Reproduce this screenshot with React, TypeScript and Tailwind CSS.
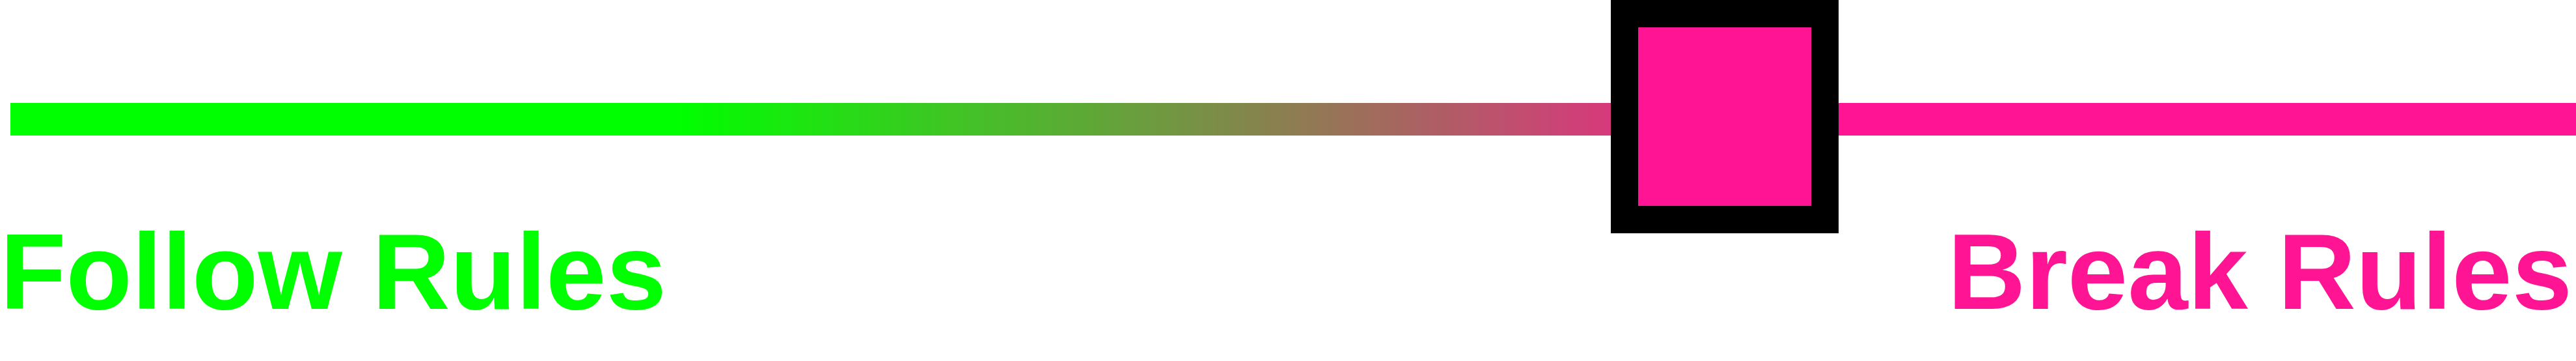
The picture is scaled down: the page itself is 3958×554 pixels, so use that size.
const RuleSlider: React.FC = () => {
  return (
    <div className="w-[3958px] h-[554px] bg-white overflow-hidden font-['Liberation_Sans',Arial,sans-serif]">
      {/* slider */}
      <div className="flex items-start h-[358px]">
        <div className="ml-[16px] mt-[158px] w-[2459px] h-[50px] bg-[linear-gradient(to_right,#00ff00_41.6%,#ff1493_111%)]" />
        <div className="w-[350px] h-[358px] shrink-0 border-[42px] border-black bg-[#ff1493]" />
        <div className="flex-1 mt-[158px] h-[50px] bg-[#ff1493]" />
      </div>

      {/* labels */}
      <div className="flex justify-between pr-[6px] text-[166px] leading-[118px] font-bold">
        <span className="text-[#00ff00]">Follow Rules</span>
        <span className="text-[#ff1493]">Break Rules</span>
      </div>
    </div>
  );
};

export default function App() {
  return <RuleSlider />;
}
